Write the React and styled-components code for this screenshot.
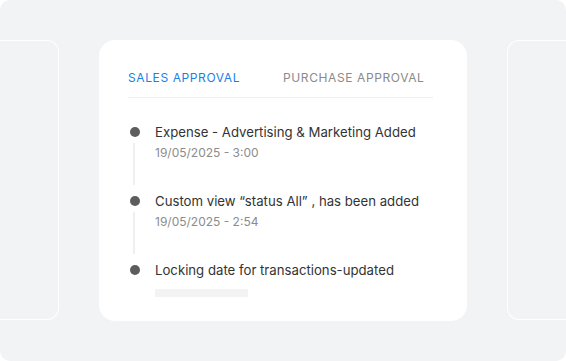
import styled, { createGlobalStyle } from "styled-components";

const GlobalStyle = createGlobalStyle`
  html, body {
    margin: 0;
    padding: 0;
    background: #ffffff;
  }
  body {
    font-family: Inter, "Noto Sans", "DejaVu Sans", sans-serif;
    -webkit-font-smoothing: antialiased;
  }
`;

const Stage = styled.div`
  width: 566px;
  height: 361px;
  box-sizing: border-box;
  background: #f2f3f5;
  border-radius: 10px;
  overflow: hidden;
  padding: 40px 0 40px 0;
  display: grid;
  grid-template-columns: 59px 368px 1fr;
  column-gap: 40px;
`;

const SideCard = styled.div`
  height: 280px;
  box-sizing: border-box;
  border: 1px solid #ffffff;
  border-left: ${(p) => (p.$side === "left" ? "none" : "1px solid #ffffff")};
  border-right: ${(p) => (p.$side === "right" ? "none" : "1px solid #ffffff")};
  border-radius: ${(p) => (p.$side === "left" ? "0 12px 12px 0" : "12px 0 0 12px")};
`;

const Card = styled.div`
  background: #ffffff;
  border-radius: 16px;
  height: 281px;
  box-sizing: border-box;
  padding: 28px 34px 0 29px;
  white-space: nowrap;
`;

const Tabs = styled.div`
  display: flex;
  gap: 43px;
  padding-bottom: 10px;
  border-bottom: 1px solid #eeeeef;
`;

const Tab = styled.div`
  font-size: 12px;
  line-height: 19px;
  letter-spacing: 0.6px;
  text-transform: uppercase;
  color: ${(p) => (p.$active ? "#1b7fe6" : "#8a8a8a")};
`;

const List = styled.div`
  margin-top: 24px;
  display: flex;
  flex-direction: column;
`;

const Item = styled.div`
  display: flex;
  gap: 13px;
  padding-bottom: ${(p) => (p.$last ? "0" : "28px")};
`;

const Marker = styled.div`
  width: 14px;
  display: flex;
  flex-direction: column;
  align-items: center;
  margin-bottom: ${(p) => (p.$last ? "0" : "-28px")};
`;

const Dot = styled.span`
  width: 10px;
  height: 10px;
  margin-top: 5px;
  border-radius: 50%;
  background: #5d5d5d;
  flex: none;
`;

const Rail = styled.span`
  flex: 1;
  width: 2px;
  margin: 6px 0 6px -2px;
  background: #efefef;
`;

const Body = styled.div`
  display: flex;
  flex-direction: column;
`;

const Title = styled.div`
  font-size: 13.2px;
  line-height: 20px;
  color: #333333;
`;

const Meta = styled.div`
  font-size: 12px;
  line-height: 20px;
  margin-top: 1px;
  color: #8c8c8c;
`;

const Placeholder = styled.div`
  margin-top: 9px;
  width: 93px;
  height: 8px;
  background: #f3f3f3;
`;

const events = [
  { title: "Expense - Advertising & Marketing Added", time: "19/05/2025 - 3:00" },
  { title: "Custom view \u201Cstatus All\u201D , has been added", time: "19/05/2025 - 2:54" },
  { title: "Locking date for transactions-updated", time: null },
];

export default function App() {
  return (
    <>
      <GlobalStyle />
      <Stage>
        <SideCard $side="left" />
        <Card>
          <Tabs>
            <Tab $active>Sales Approval</Tab>
            <Tab>Purchase Approval</Tab>
          </Tabs>
          <List>
            {events.map((e, i) => {
              const last = i === events.length - 1;
              return (
                <Item key={i} $last={last}>
                  <Marker $last={last}>
                    <Dot />
                    {!last && <Rail />}
                  </Marker>
                  <Body>
                    <Title>{e.title}</Title>
                    {e.time ? <Meta>{e.time}</Meta> : <Placeholder />}
                  </Body>
                </Item>
              );
            })}
          </List>
        </Card>
        <SideCard $side="right" />
      </Stage>
    </>
  );
}
